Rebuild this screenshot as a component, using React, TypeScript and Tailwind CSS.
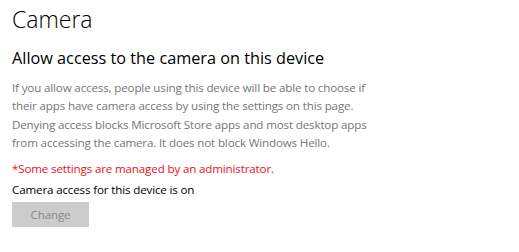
const App = () => {
  return (
    <div className="w-[519px] h-[252px] bg-white pl-[12px] pt-[4px] font-['Open_Sans',sans-serif] overflow-hidden">
      <h1 className="text-[23px] leading-[30px] font-light text-black">Camera</h1>
      <h2 className="mt-[13px] text-[16.25px] leading-[22px] text-black">Allow access to the camera on this device</h2>
      <p className="mt-[10px] text-[11.6px] leading-[18.3px] tracking-[-0.15px] text-[#767676]">
        If you allow access, people using this device will be able to choose if
        <br />
        their apps have camera access by using the settings on this page.
        <br />
        Denying access blocks Microsoft Store apps and most desktop apps
        <br />
        from accessing the camera. It does not block Windows Hello.
      </p>
      <p className="mt-[8px] text-[11.6px] leading-[18px] tracking-[-0.15px] text-[#e81123]">
        *Some settings are managed by an administrator.
      </p>
      <p className="mt-[3px] text-[11.6px] leading-[18px] tracking-[-0.15px] text-black">
        Camera access for this device is on
      </p>
      <button className="mt-[3px] w-[77px] h-[25px] bg-[#cccccc] text-[11.6px] tracking-[-0.15px] text-[#8a8a8a]">
        Change
      </button>
    </div>
  );
};

export default App;
